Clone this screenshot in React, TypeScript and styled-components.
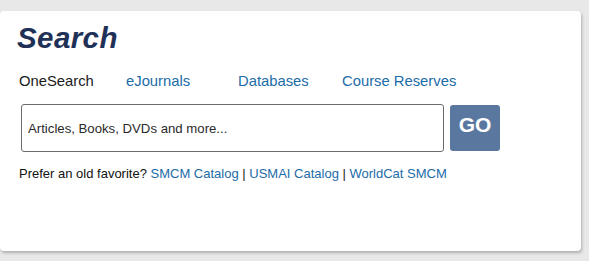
import styled, { createGlobalStyle } from "styled-components";

const Global = createGlobalStyle`
	body {
		margin: 0;
		background: #e8e8e8;
		font-family: "Liberation Sans", Arial, sans-serif;
	}
`;

const tabs = [
	{ label: "OneSearch", active: true, width: 107 },
	{ label: "eJournals", active: false, width: 112 },
	{ label: "Databases", active: false, width: 104 },
	{ label: "Course Reserves", active: false, width: 130 },
];

const catalogs = ["SMCM Catalog", "USMAI Catalog", "WorldCat SMCM"];

export default function App() {
	return (
		<>
			<Global />
			<Page>
				<Card>
					<Title>Search</Title>
					<Tabs>
						{tabs.map((t) => (
							<Tab key={t.label} $active={t.active} $width={t.width}>
								{t.label}
							</Tab>
						))}
					</Tabs>
					<SearchRow>
						<Field placeholder="Articles, Books, DVDs and more..." />
						<GoBtn type="button">GO</GoBtn>
					</SearchRow>
					<Favorites>
						Prefer an old favorite?{" "}
						{catalogs.map((c, i) => (
							<span key={c}>
								{i > 0 && <Sep> | </Sep>}
								<CatLink href="#">{c}</CatLink>
							</span>
						))}
					</Favorites>
				</Card>
			</Page>
		</>
	);
}

const Page = styled.div`
	padding-top: 11px;
	height: 261px;
	box-sizing: border-box;
`;

const Card = styled.div`
	width: 581px;
	height: 240px;
	box-sizing: border-box;
	background: #fff;
	border-radius: 4px;
	box-shadow: 1px 2px 3px rgba(0, 0, 0, 0.25);
	padding: 11px 0 0 19px;
`;

const Title = styled.h1`
	margin: 0 0 0 -2px;
	font-size: 29.5px;
	line-height: 32px;
	font-weight: 700;
	font-style: italic;
	color: #1f3157;
	letter-spacing: 0.4px;
`;

const Tabs = styled.div`
	display: flex;
	margin-top: 18px;
	height: 18px;
	align-items: center;
`;

const Tab = styled.a<{ $active: boolean; $width: number }>`
	width: ${(p) => p.$width}px;
	font-size: 14.8px;
	color: ${(p) => (p.$active ? "#1a1a1a" : "#1b6ca8")};
	text-decoration: none;
	cursor: pointer;
`;

const SearchRow = styled.div`
	display: flex;
	align-items: center;
	gap: 6px;
	margin-top: 14px;
	margin-left: 2px;
`;

const Field = styled.input`
	width: 423px;
	height: 48px;
	box-sizing: border-box;
	border: 1px solid #6b6b6b;
	border-radius: 3px;
	padding: 0 6px;
	font-family: "Liberation Sans", Arial, sans-serif;
	font-size: 13.2px;
	&::placeholder {
		color: #2a2a2a;
	}
`;

const GoBtn = styled.button`
	width: 50px;
	height: 46px;
	border: none;
	border-radius: 3px;
	background: #5a77a0;
	color: #fff;
	font-family: "Liberation Sans", Arial, sans-serif;
	font-size: 21px;
	font-weight: 700;
	padding: 0 0 7px;
	cursor: pointer;
`;

const Favorites = styled.p`
	margin: 14px 0 0;
	font-size: 13px;
	color: #111;
`;

const Sep = styled.span`
	color: #222;
`;

const CatLink = styled.a`
	color: #1b6ca8;
	text-decoration: none;
`;
